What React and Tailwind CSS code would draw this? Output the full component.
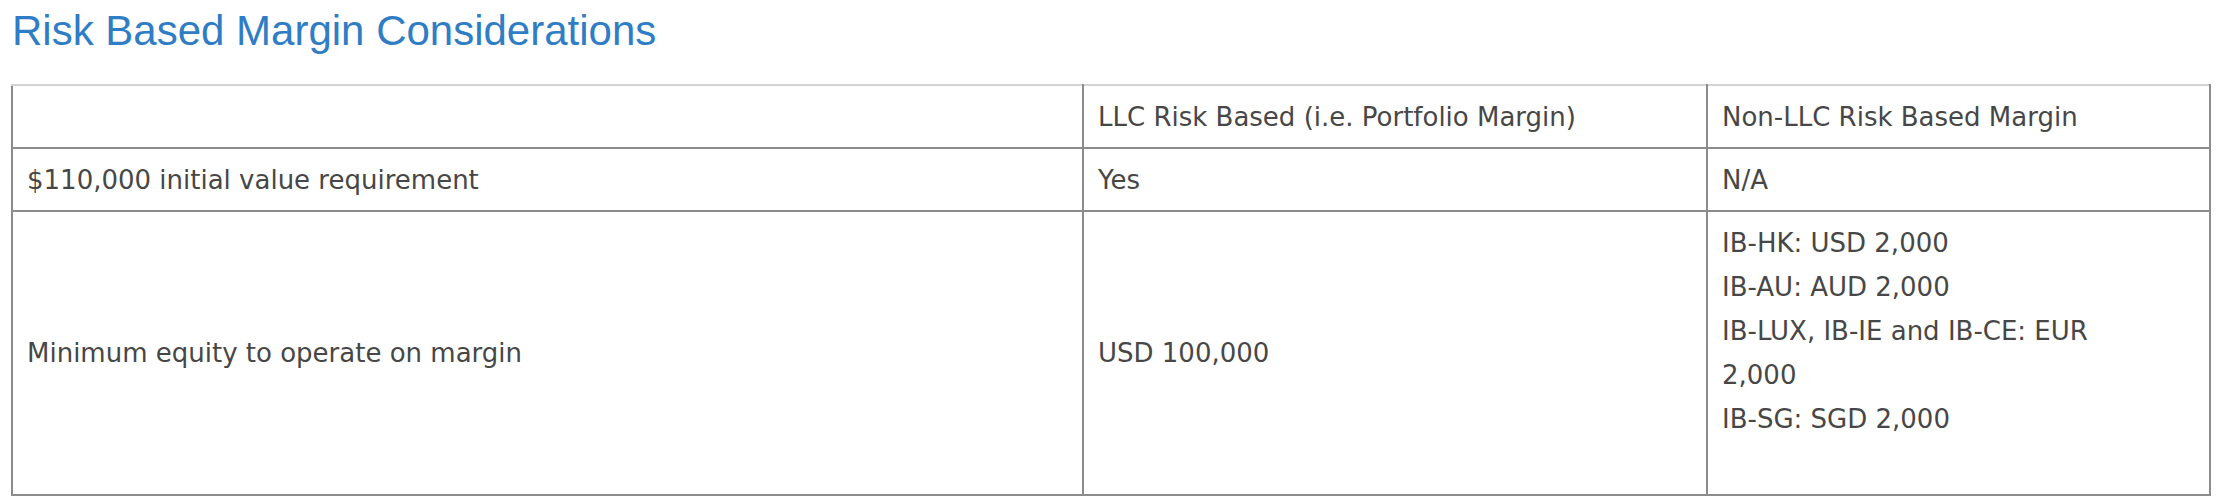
// ── Risk Based Margin Considerations ─────────────────────────────────
const rows = [
  { label: '$110,000 initial value requirement', llc: 'Yes', nonLlc: ['N/A'] },
  {
    label: 'Minimum equity to operate on margin',
    llc: 'USD 100,000',
    // the EUR line wraps in the original column, keep that break
    nonLlc: ['IB-HK: USD 2,000', 'IB-AU: AUD 2,000', 'IB-LUX, IB-IE and IB-CE: EUR', '2,000', 'IB-SG: SGD 2,000'],
    tall: true,
  },
]

const cell = 'border-2 border-[#8c8c8c] px-[14px] text-left font-normal'

export default function App() {
  return (
    <div className="bg-white h-[498px] overflow-hidden pl-[11px] pr-[7px] text-[#474747]" style={{ fontFamily: '"DejaVu Sans", Verdana, sans-serif' }}>
      <h2 className="pt-[7px] pl-[1px] text-[42px] leading-[47px] text-[#2f7dc5]" style={{ fontFamily: '"Liberation Sans", Arial, sans-serif' }}>
        Risk Based Margin Considerations
      </h2>
      <table className="mt-[30px] w-[2198px] table-fixed border-collapse text-[26px] leading-[44px]">
        <colgroup>
          <col className="w-[1071px]" />
          <col className="w-[624px]" />
          <col className="w-[503px]" />
        </colgroup>
        <thead>
          <tr className="h-[63px]">
            <th className={`${cell} border-t-[#d4d4d4] align-middle`}></th>
            <th className={`${cell} border-t-[#d4d4d4] align-middle`}>LLC Risk Based (i.e. Portfolio Margin)</th>
            <th className={`${cell} border-t-[#d4d4d4] align-middle`}>Non-LLC Risk Based Margin</th>
          </tr>
        </thead>
        <tbody>
          {rows.map(r => (
            <tr key={r.label} className={r.tall ? 'h-[284px]' : 'h-[63px]'}>
              <td className={`${cell} align-middle`}>{r.label}</td>
              <td className={`${cell} align-middle`}>{r.llc}</td>
              <td className={`${cell} ${r.tall ? 'align-top pt-[9px]' : 'align-middle'}`}>
                {r.nonLlc.map(l => <div key={l}>{l}</div>)}
              </td>
            </tr>
          ))}
        </tbody>
      </table>
    </div>
  )
}
